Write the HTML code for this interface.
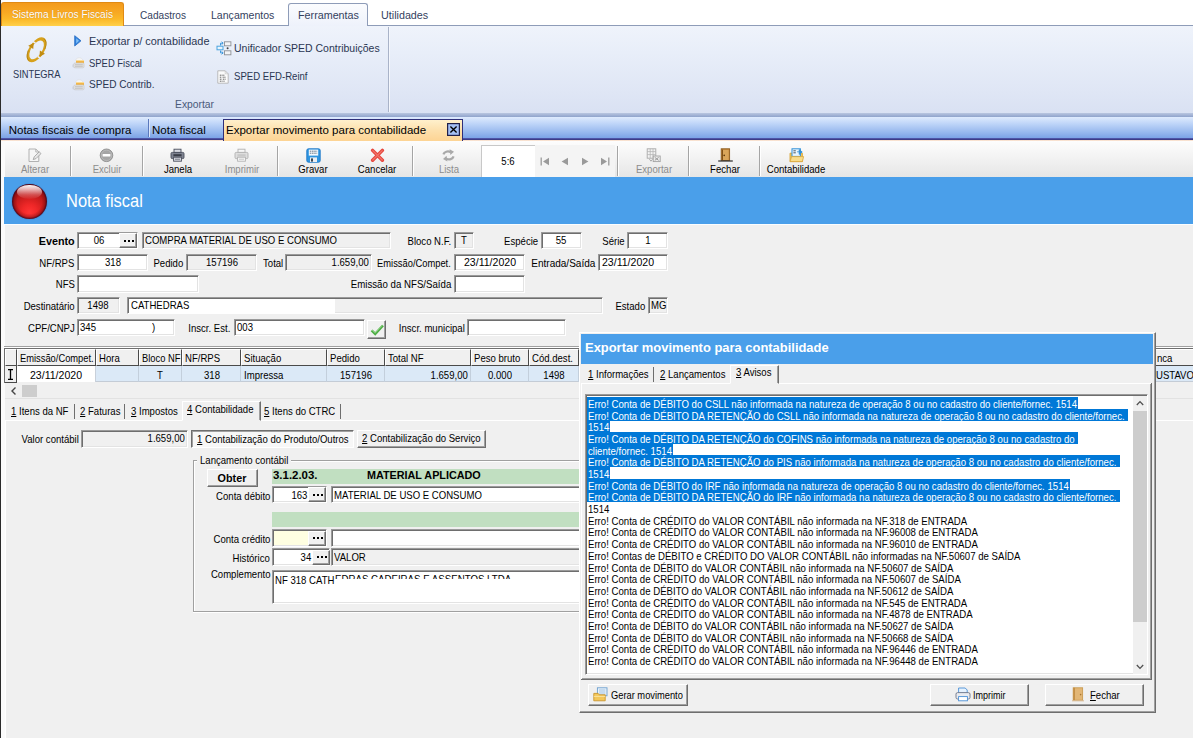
<!DOCTYPE html>
<html lang="pt-BR">
<head>
<meta charset="utf-8">
<title>Sistema Livros Fiscais</title>
<style>
*{box-sizing:border-box;margin:0;padding:0}
html,body{width:1193px;height:738px;overflow:hidden;background:#f0f0f0}
body{position:relative;font-family:"Liberation Sans",sans-serif;font-size:11px;color:#000}
.a{position:absolute;white-space:nowrap}
.t{position:absolute;white-space:nowrap;line-height:13px;height:13px;font-size:11px}
#rtabs{left:0;top:0;width:1193px;height:26px;background:#fff}
#rbody{left:1px;top:25px;width:1192px;height:89px;background:linear-gradient(#eff3fb 0%,#e8eef9 30%,#dfe6f5 75%,#d9e1f3 100%);border-top:1px solid #8e9cb8}
.rt{font-size:10.75px;color:#34415e;line-height:14px;height:14px}
.ri{font-size:10.75px;color:#2a3652;line-height:14px;height:14px}
#dtabs{left:1px;top:113px;width:1192px;height:28px;background:linear-gradient(#b9c6e0 0px,#8fa3cc 4px,#dce9fd 4.5px,#bdd4f8 11px,#98b9ee 19px,#7ba3e6 25px,#45459a 25.6px,#3b3b85 26.6px,#f3d3c0 26.9px,#fdeedd 28px)}
.dt{font-size:11.5px;line-height:15px;height:15px;color:#000}
.f{position:absolute;border:1px solid;border-color:#9a9a9a #fff #fff #9a9a9a;box-shadow:inset 1px 1px 0 #6e6e6e,inset -1px -1px 0 #e3e3e3}
.btn{position:absolute;background:#f0f0f0;border:1px solid;border-color:#fff #6e6e6e #6e6e6e #fff;box-shadow:inset -1px -1px 0 #a0a0a0}
.btn i{position:absolute;top:50%;margin-top:-1px;width:2px;height:2px;background:#000}
.sep{position:absolute;width:2px;border-left:1px solid #a5a5a5;border-right:1px solid #fff}
.gh{position:absolute;height:17px;background:#f0f0f0;border-right:1px solid #4a4a4a;border-left:1px solid #fff;border-bottom:1px solid #4a4a4a;border-top:1px solid #fff}
.gc{position:absolute;height:16px;background:#dbe9f7;border-right:1px solid #c8d4e0}
</style>
</head>
<body>

<div class="a" id="rtabs"></div>
<div class="a" id="rbody"></div>
<div class="a" style="left:0;top:0;width:1px;height:738px;background:#2b2b2b"></div>
<div class="a" style="left:1px;top:2px;width:123px;height:24px;border-radius:3px 3px 0 0;background:linear-gradient(#f39a1c 0%,#f7a823 40%,#fbb828 70%,#ffd04a 100%);border:1px solid #e08a14;border-bottom:0"></div>
<div class="a rt" style="left:11.5px;top:7px;transform:scaleX(0.945);transform-origin:0 0;color:#fff;text-shadow:0 0 1px #c77a10;">Sistema Livros Fiscais</div>
<div class="a" style="left:288px;top:3px;width:80px;height:23px;border:1px solid #8e9cb8;border-bottom:0;border-radius:3px 3px 0 0;background:linear-gradient(#fbfcfe,#eef2fb)"></div>
<div class="a rt" style="left:139.5px;top:8px;transform:scaleX(0.939);transform-origin:0 0;">Cadastros</div>
<div class="a rt" style="left:210.7px;top:8px;transform:scaleX(0.982);transform-origin:0 0;">Lançamentos</div>
<div class="a rt" style="left:298px;top:8px;transform:scaleX(1);transform-origin:0 0;">Ferramentas</div>
<div class="a rt" style="left:381px;top:8px;transform:scaleX(1);transform-origin:0 0;">Utilidades</div>
<div class="a ri" style="left:13px;top:66.7px;transform:scaleX(0.864);transform-origin:0 0;">SINTEGRA</div>
<div class="a ri" style="left:88.5px;top:34.3px;transform:scaleX(1.013);transform-origin:0 0;">Exportar p/ contabilidade</div>
<div class="a ri" style="left:88.5px;top:55.6px;transform:scaleX(0.878);transform-origin:0 0;">SPED Fiscal</div>
<div class="a ri" style="left:88.5px;top:77px;transform:scaleX(0.937);transform-origin:0 0;">SPED Contrib.</div>
<div class="a ri" style="left:234px;top:41.4px;transform:scaleX(0.975);transform-origin:0 0;">Unificador SPED Contribuições</div>
<div class="a ri" style="left:234px;top:69.4px;transform:scaleX(0.892);transform-origin:0 0;">SPED EFD-Reinf</div>
<div class="a ri" style="left:174.8px;top:97px;transform:scaleX(0.96);transform-origin:0 0;color:#4a5a7a;">Exportar</div>
<div class="a" style="left:388px;top:27px;width:1px;height:85px;background:#a9b3c8"></div>
<div class="a" style="left:389px;top:27px;width:1px;height:85px;background:#f4f7fd"></div>
<svg class="a" style="left:22px;top:33px" width="30" height="34" viewBox="0 0 30 34"><g transform="translate(14.6,16.8) rotate(33)"><path fill-rule="evenodd" fill="#d7a11c" d="M0-14a7.6 14 0 1 0 0 28a7.6 14 0 1 0 0-28zM0-10.6a5.4 10.6 0 1 1 0 21.2a5.4 10.6 0 1 1 0-21.2z"/><path fill="#c08c12" d="M3.2-1.2h6l-3 5.4z"/><path fill="#c08c12" d="M-3.2 1.2h-6l3-5.4z"/><path d="M4.6 5h4.6M-4.6-5h-4.6" stroke="#e9eef9" stroke-width="1.5"/><path d="M0-13.2a7 13.2 0 0 1 6.6 8" fill="none" stroke="#8a6410" stroke-width=".6" opacity=".7"/><path d="M0 13.2a7 13.2 0 0 1-6.6-8" fill="none" stroke="#8a6410" stroke-width=".6" opacity=".7"/></g></svg>
<svg class="a" style="left:74.3px;top:35.3px" width="8" height="12" viewBox="0 0 8 12"><path d="M.7 .7L7 5.8.7 11z" fill="#2f7fdc" stroke="#2a6fc4" stroke-width=".8" stroke-linejoin="round"/><path d="M2.2 3.2L5 5.8 2.2 8.6z" fill="#7fc0f7"/></svg>
<svg class="a" style="left:72px;top:57px" width="13" height="12" viewBox="0 0 13 12"><ellipse cx="3" cy="8.8" rx="3" ry="2" fill="#b8c0d2" opacity=".35"/><path d="M3.4 3.4c.6-2 2.4-2.6 3.8-2.6s3 .6 3.8 2.6z" fill="#f7f7f5" stroke="#d6d8de" stroke-width=".5"/><rect x="4" y="3" width="8" height="3.2" fill="#f2b649"/><rect x="4" y="3" width="8" height="1" fill="#f9dc9a"/><rect x="1.8" y="6" width="10.2" height="4.8" rx="1.2" fill="#e4e4e2" stroke="#c2c3c6" stroke-width=".6"/><path d="M3 7.7h7.8M3 9.3h7.8" stroke="#b4b5b8" stroke-width=".7"/></svg>
<svg class="a" style="left:72px;top:79px" width="13" height="12" viewBox="0 0 13 12"><ellipse cx="3" cy="8.8" rx="3" ry="2" fill="#b8c0d2" opacity=".35"/><path d="M3.4 3.4c.6-2 2.4-2.6 3.8-2.6s3 .6 3.8 2.6z" fill="#f7f7f5" stroke="#d6d8de" stroke-width=".5"/><rect x="4" y="3" width="8" height="3.2" fill="#f2b649"/><rect x="4" y="3" width="8" height="1" fill="#f9dc9a"/><rect x="1.8" y="6" width="10.2" height="4.8" rx="1.2" fill="#e4e4e2" stroke="#c2c3c6" stroke-width=".6"/><path d="M3 7.7h7.8M3 9.3h7.8" stroke="#b4b5b8" stroke-width=".7"/></svg>
<svg class="a" style="left:216px;top:41px" width="16" height="15" viewBox="0 0 16 15"><rect x="8.5" y=".8" width="6.4" height="4" fill="#f4f5f7" stroke="#8d9096" stroke-width=".9"/><rect x="8.5" y="9.8" width="6.4" height="4" fill="#f4f5f7" stroke="#8d9096" stroke-width=".9"/><rect x="1" y="5.2" width="6" height="3.6" fill="#eaf4fc" stroke="#4aa3df" stroke-width="1"/><path d="M4.5 4.5V2.2h2.4M5.6 .8l1.6 1.4-1.6 1.4" fill="none" stroke="#2f8fd8" stroke-width=".9"/><path d="M4.5 9.6v2.3h2.4M5.6 10.5l1.6 1.4-1.6 1.4" fill="none" stroke="#2f8fd8" stroke-width=".9"/><circle cx="11.6" cy="7.3" r="1" fill="#444"/></svg>
<svg class="a" style="left:217px;top:70px" width="12" height="14" viewBox="0 0 12 14"><path d="M.8 .8h7.4l3 3v9.4H.8z" fill="#fbfbfb" stroke="#b4b4b4" stroke-width=".9"/><path d="M8.2 .8v3h3" fill="none" stroke="#c4c4c4" stroke-width=".7"/><path d="M2.8 5.2h4.8M2.8 7.2h2M5.6 7.2h3M2.8 9.2h2.4M6 9.2h2.6M2.8 11.2h2.8M6.4 11.2h1.6" stroke="#555" stroke-width=".9" stroke-dasharray="1.2 .5"/></svg>
<div class="a" id="dtabs"></div>
<div class="a dt" style="left:8.7px;top:123px">Notas fiscais de compra</div>
<div class="a" style="left:148px;top:119px;width:1px;height:18px;background:#5b79bd"></div>
<div class="a" style="left:149px;top:119px;width:1px;height:18px;background:#dbe6fb"></div>
<div class="a dt" style="left:152px;top:123px">Nota fiscal</div>
<div class="a" style="left:223px;top:118.5px;width:240px;height:22.5px;background:linear-gradient(#fff0cc,#fde0ac 50%,#fdd494);border:1px solid #2f2f7a;border-bottom:0"></div>
<div class="a dt" style="left:226px;top:123px">Exportar movimento para contabilidade</div>
<svg class="a" style="left:447.3px;top:122.5px" width="13" height="13" viewBox="0 0 13 13"><rect x=".6" y=".6" width="11.8" height="11.8" fill="#a4c0f4" stroke="#20204a" stroke-width="1.2"/><path d="M3.4 3.4l6.2 6.2M9.6 3.4l-6.2 6.2" stroke="#000" stroke-width="1.35"/></svg>
<div class="a" style="left:1px;top:141px;width:1192px;height:36px;background:linear-gradient(#fdfdfd,#f4f4f4 40%,#e6e6e6)"></div>
<div class="a" style="left:1px;top:141px;width:3.5px;height:597px;background:#fbfbfb"></div>
<div class="a" style="left:481px;top:145px;width:54px;height:32px;background:#fff;border-top:1px solid #c8c8c8;border-left:1px solid #c8c8c8"></div>
<div class="a" style="left:535px;top:145px;width:80px;height:32px;background:#f4f4f4"></div>
<div class="sep" style="left:70px;top:146px;height:30px"></div>
<div class="sep" style="left:142px;top:146px;height:30px"></div>
<div class="sep" style="left:277px;top:146px;height:30px"></div>
<div class="sep" style="left:412px;top:146px;height:30px"></div>
<div class="sep" style="left:617px;top:146px;height:30px"></div>
<div class="sep" style="left:688px;top:146px;height:30px"></div>
<div class="sep" style="left:759px;top:146px;height:30px"></div>
<div class="t" style="left:-115px;width:300px;text-align:center;transform-origin:50% 0;top:163px;transform:scaleX(0.87);color:#8c8c8c;">Alterar</div>
<div class="t" style="left:-43px;width:300px;text-align:center;transform-origin:50% 0;top:163px;transform:scaleX(0.87);color:#8c8c8c;">Excluir</div>
<div class="t" style="left:28px;width:300px;text-align:center;transform-origin:50% 0;top:163px;transform:scaleX(0.87);color:#000;">Janela</div>
<div class="t" style="left:92px;width:300px;text-align:center;transform-origin:50% 0;top:163px;transform:scaleX(0.87);color:#8c8c8c;">Imprimir</div>
<div class="t" style="left:163px;width:300px;text-align:center;transform-origin:50% 0;top:163px;transform:scaleX(0.87);color:#000;">Gravar</div>
<div class="t" style="left:227px;width:300px;text-align:center;transform-origin:50% 0;top:163px;transform:scaleX(0.87);color:#000;">Cancelar</div>
<div class="t" style="left:298.5px;width:300px;text-align:center;transform-origin:50% 0;top:163px;transform:scaleX(0.87);color:#8c8c8c;">Lista</div>
<div class="t" style="left:503.5px;width:300px;text-align:center;transform-origin:50% 0;top:163px;transform:scaleX(0.87);color:#8c8c8c;">Exportar</div>
<div class="t" style="left:575px;width:300px;text-align:center;transform-origin:50% 0;top:163px;transform:scaleX(0.87);color:#000;">Fechar</div>
<div class="t" style="left:646px;width:300px;text-align:center;transform-origin:50% 0;top:163px;transform:scaleX(0.87);color:#000;">Contabilidade</div>
<div class="t" style="left:357.5px;width:300px;text-align:center;transform-origin:50% 0;top:155px;transform:scaleX(0.87);">5:6</div>
<svg class="a" style="left:27.1px;top:147.5px" width="15" height="15" viewBox="0 0 15 15"><path d="M2 1h6.8l3 3v9.5H2z" fill="#f6f6f6" stroke="#a9a9a9" stroke-width=".9"/><path d="M8.8 1v3h3" fill="none" stroke="#a9a9a9" stroke-width=".8"/><path d="M6.2 11.6l1-2.8 5-5 1.8 1.8-5 5z" fill="#e6e6e6" stroke="#9c9c9c" stroke-width=".8" stroke-linejoin="round"/></svg>
<svg class="a" style="left:98.5px;top:147.5px" width="15" height="15" viewBox="0 0 15 15"><circle cx="7.5" cy="7.3" r="6.3" fill="#a6a6a6" stroke="#8d8d8d" stroke-width=".9"/><circle cx="7.5" cy="7.3" r="5.2" fill="none" stroke="#bdbdbd" stroke-width=".8"/><rect x="3.6" y="6" width="7.8" height="2.6" rx=".6" fill="#fff"/></svg>
<svg class="a" style="left:170.3px;top:147.5px" width="15" height="15" viewBox="0 0 15 15"><rect x="4" y="1.2" width="7" height="3.4" fill="#d9dbe3" stroke="#4b4f5c" stroke-width=".9"/><rect x="1" y="4.4" width="13" height="6.2" rx="1.2" fill="#7d8290" stroke="#4b4f5c" stroke-width=".9"/><rect x="3.4" y="6.2" width="8.2" height="2" fill="#3a3d48"/><rect x="3.6" y="9.2" width="7.8" height="4" fill="#d9dbe3" stroke="#4b4f5c" stroke-width=".9"/><path d="M5 11.2h5" stroke="#4b4f5c" stroke-width=".7"/></svg>
<svg class="a" style="left:234.2px;top:147.5px" width="15" height="15" viewBox="0 0 15 15"><rect x="4" y="1.2" width="7" height="3.4" fill="#f7f7f7" stroke="#b1b1b1" stroke-width=".9"/><rect x="1" y="4.4" width="13" height="6.2" rx="1.2" fill="#dedede" stroke="#b1b1b1" stroke-width=".9"/><rect x="3.4" y="6.2" width="8.2" height="2" fill="#c9c9c9"/><rect x="3.6" y="9.2" width="7.8" height="4" fill="#f7f7f7" stroke="#b1b1b1" stroke-width=".9"/><path d="M5 11.2h5" stroke="#b1b1b1" stroke-width=".7"/></svg>
<svg class="a" style="left:305.5px;top:147.5px" width="15" height="15" viewBox="0 0 15 15"><rect x=".8" y=".8" width="13.4" height="13.4" rx="1.6" fill="#2f95e0" stroke="#1d78c8" stroke-width=".9"/><rect x="2.8" y="1.6" width="9.4" height="6" fill="#f4f9fe"/><path d="M3.8 3.2h7.4M3.8 5.2h7.4" stroke="#5a6a7c" stroke-width=".9" stroke-dasharray="1.6 .6"/><rect x="4" y="9.4" width="7" height="4.6" fill="#e9eef4"/><rect x="5" y="10.4" width="2" height="3.2" fill="#3a4754"/></svg>
<svg class="a" style="left:369.5px;top:147.5px" width="15" height="15" viewBox="0 0 15 15"><path d="M2.6 2.4l9.8 9.8M12.4 2.4l-9.8 9.8" stroke="#e5453c" stroke-width="3.4" stroke-linecap="round"/><path d="M2.8 2.6l9.4 9.4M12.2 2.6l-9.4 9.4" stroke="#f2746a" stroke-width="1.2" stroke-linecap="round"/></svg>
<svg class="a" style="left:441.0px;top:147.5px" width="15" height="15" viewBox="0 0 15 15"><path d="M2.4 6.4c.8-2.6 4.4-3.8 7.4-2.2" fill="none" stroke="#a9a9a9" stroke-width="2.2"/><path d="M8.6 1.2l4.4 2.6-3.6 3.2z" fill="#a9a9a9"/><path d="M12.6 8.4c-.8 2.6-4.4 3.8-7.4 2.2" fill="none" stroke="#a9a9a9" stroke-width="2.2"/><path d="M6.4 13.6L2 11l3.6-3.2z" fill="#a9a9a9"/></svg>
<svg class="a" style="left:646.0px;top:147.5px" width="15" height="15" viewBox="0 0 15 15"><rect x="1.2" y=".8" width="8.6" height="9.4" fill="#f3f3f3" stroke="#a9a9a9" stroke-width=".9"/><path d="M1.2 3.6h8.6M1.2 6.6h8.6M4.2 .8v9.4M7 .8v9.4" stroke="#b5b5b5" stroke-width=".8"/><rect x="7.2" y="8" width="7" height="5.6" fill="#ececec" stroke="#a2a2a2" stroke-width=".9"/><path d="M8.8 9.4l3.8 3M12.6 9.4l-3.8 3" stroke="#9a9a9a" stroke-width="1"/><path d="M3.4 11.2l1.6 2 1.6-2" fill="none" stroke="#a9a9a9" stroke-width="1"/></svg>
<svg class="a" style="left:717.5px;top:147.5px" width="15" height="15" viewBox="0 0 15 15"><rect x="3.2" y=".8" width="8.4" height="11.6" fill="#c68a3c" stroke="#8c5a1c" stroke-width=".9"/><rect x="5" y="2" width="5.6" height="10" fill="#d9a55a"/><path d="M4.4 1.6v10.4" stroke="#7a4a12" stroke-width="1"/><circle cx="6.2" cy="7.4" r=".8" fill="#5a3408"/><path d="M.2 13h14.6" stroke="#2b2b2b" stroke-width="1.2"/></svg>
<svg class="a" style="left:788.5px;top:147.5px" width="16" height="15" viewBox="0 0 16 15"><path d="M1 5.2h12.4v8.4H1z" fill="#f3c75a" stroke="#d9a63a" stroke-width=".9"/><rect x="3" y=".8" width="8.4" height="7.6" fill="#eaf5fd" stroke="#2f8fd8" stroke-width="1"/><path d="M4.4 2.8h2.4M4.4 4.8h2.4" stroke="#3a4754" stroke-width=".9"/><path d="M8 3.8h3.4M10.2 1.6l3 2.4-3 2.4z" fill="#2f8fd8" stroke="#2f8fd8" stroke-width=".8"/><path d="M1 13.6l1.6-5h12l-1.2 5z" fill="#f8dc8a" stroke="#d9a63a" stroke-width=".8"/></svg>
<svg class="a" style="left:540px;top:156.5px" width="10" height="9" viewBox="0 0 10 9"><path d="M1.2 .6v7.8" stroke="#9a9a9a" stroke-width="1.3"/><path d="M9 .8L3 4.5l6 3.7z" fill="#9a9a9a"/></svg>
<svg class="a" style="left:560px;top:156.5px" width="9" height="9" viewBox="0 0 9 9"><path d="M8 .8L1.6 4.5 8 8.2z" fill="#9a9a9a"/></svg>
<svg class="a" style="left:581px;top:156.5px" width="9" height="9" viewBox="0 0 9 9"><path d="M1 .8l6.4 3.7L1 8.2z" fill="#9a9a9a"/></svg>
<svg class="a" style="left:600px;top:156.5px" width="10" height="9" viewBox="0 0 10 9"><path d="M8.8 .6v7.8" stroke="#9a9a9a" stroke-width="1.3"/><path d="M1 .8l6 3.7-6 3.7z" fill="#9a9a9a"/></svg>
<div class="a" style="left:4px;top:177.4px;width:1189px;height:46.3px;background:#4a9fea"></div>
<div class="a" style="left:4px;top:223.7px;width:1189px;height:1px;background:#fbfdfe"></div>
<div class="a" style="left:11.9px;top:183.8px;width:34.8px;height:34.8px;border-radius:50%;background:radial-gradient(circle closest-side at 50% 50%,rgba(0,0,0,0) 0%,rgba(0,0,0,0) 70%,rgba(80,0,10,.3) 88%,rgba(50,0,25,.85) 100%),radial-gradient(circle at 50% 80%,#ff3434 0%,#f02828 22%,#d21f1f 42%,#b81919 60%,#a81515 100%);box-shadow:0 0 1px rgba(50,10,50,.7)"></div>
<div class="a" style="left:16.6px;top:184.6px;width:25.2px;height:14.6px;border-radius:50%;background:linear-gradient(rgba(255,255,255,.97) 0%,rgba(255,235,235,.75) 30%,rgba(255,200,200,.3) 70%,rgba(255,160,160,.05) 100%)"></div>
<div class="t" style="left:66px;transform-origin:0 0;top:191px;transform:scaleX(0.94);color:#fff;font-size:17.5px;line-height:20px;height:20px;">Nota fiscal</div>
<div class="t" style="right:1118.5px;transform-origin:100% 0;top:234.8px;transform:scaleX(0.98);font-weight:bold;">Evento</div>
<div class="f" style="left:77px;top:231.5px;width:61px;height:17.6px;background:#fff"></div>
<div class="t" style="left:-51.2px;width:300px;text-align:center;transform-origin:50% 0;top:233.6px;transform:scaleX(0.87);">06</div>
<div class="btn" style="left:119px;top:233px;width:18px;height:15px"><i style="left:4px"></i><i style="left:8px"></i><i style="left:12px"></i></div>
<div class="f" style="left:142px;top:231.5px;width:249px;height:17.6px;background:#f0f0f0"></div>
<div class="t" style="left:145px;transform-origin:0 0;top:233.6px;transform:scaleX(0.87);">COMPRA MATERIAL DE USO E CONSUMO</div>
<div class="t" style="right:742px;transform-origin:100% 0;top:234.8px;transform:scaleX(0.87);">Bloco N.F.</div>
<div class="f" style="left:454px;top:231.5px;width:20px;height:17.6px;background:#f0f0f0"></div>
<div class="t" style="left:314px;width:300px;text-align:center;transform-origin:50% 0;top:233.6px;transform:scaleX(0.87);">T</div>
<div class="t" style="right:655px;transform-origin:100% 0;top:234.8px;transform:scaleX(0.87);">Espécie</div>
<div class="f" style="left:541px;top:231.5px;width:41px;height:17.6px;background:#fff"></div>
<div class="t" style="left:411px;width:300px;text-align:center;transform-origin:50% 0;top:233.6px;transform:scaleX(0.87);">55</div>
<div class="t" style="right:568px;transform-origin:100% 0;top:234.8px;transform:scaleX(0.87);">Série</div>
<div class="f" style="left:627px;top:231.5px;width:41px;height:17.6px;background:#fff"></div>
<div class="t" style="left:498px;width:300px;text-align:center;transform-origin:50% 0;top:233.6px;transform:scaleX(0.87);">1</div>
<div class="t" style="right:1118.5px;transform-origin:100% 0;top:256.8px;transform:scaleX(0.87);">NF/RPS</div>
<div class="f" style="left:77px;top:253.5px;width:70.6px;height:17.6px;background:#fff"></div>
<div class="t" style="left:-37px;width:300px;text-align:center;transform-origin:50% 0;top:255.6px;transform:scaleX(0.87);">318</div>
<div class="t" style="right:1009.5px;transform-origin:100% 0;top:256.8px;transform:scaleX(0.87);">Pedido</div>
<div class="f" style="left:186px;top:253.5px;width:71px;height:17.6px;background:#f0f0f0"></div>
<div class="t" style="left:72px;width:300px;text-align:center;transform-origin:50% 0;top:255.6px;transform:scaleX(0.87);">157196</div>
<div class="t" style="right:909.5px;transform-origin:100% 0;top:256.8px;transform:scaleX(0.87);">Total</div>
<div class="f" style="left:285px;top:253.5px;width:87px;height:17.6px;background:#f0f0f0"></div>
<div class="t" style="right:824.5px;transform-origin:100% 0;top:255.6px;transform:scaleX(0.87);">1.659,00</div>
<div class="t" style="right:742.5px;transform-origin:100% 0;top:256.8px;transform:scaleX(0.849);">Emissão/Compet.</div>
<div class="f" style="left:454px;top:253.5px;width:71px;height:17.6px;background:#fff"></div>
<div class="t" style="left:340.3px;width:300px;text-align:center;transform-origin:50% 0;top:255.6px;transform:scaleX(0.959);">23/11/2020</div>
<div class="t" style="right:597.5px;transform-origin:100% 0;top:256.8px;transform:scaleX(0.911);">Entrada/Saída</div>
<div class="f" style="left:598px;top:253.5px;width:70px;height:17.6px;background:#fff"></div>
<div class="t" style="left:601.5px;transform-origin:0 0;top:255.6px;transform:scaleX(0.959);">23/11/2020</div>
<div class="t" style="right:1118.5px;transform-origin:100% 0;top:278.3px;transform:scaleX(0.87);">NFS</div>
<div class="f" style="left:77px;top:275.0px;width:122px;height:17.6px;background:#fff"></div>
<div class="t" style="right:742px;transform-origin:100% 0;top:278.3px;transform:scaleX(0.88);">Emissão da NFS/Saída</div>
<div class="f" style="left:454px;top:275.0px;width:71px;height:17.6px;background:#fff"></div>
<div class="t" style="right:1118.5px;transform-origin:100% 0;top:299.8px;transform:scaleX(0.87);">Destinatário</div>
<div class="f" style="left:77px;top:296.5px;width:43px;height:17.6px;background:#f0f0f0"></div>
<div class="t" style="left:-52px;width:300px;text-align:center;transform-origin:50% 0;top:298.6px;transform:scaleX(0.87);">1498</div>
<div class="f" style="left:127px;top:296.5px;width:476px;height:17.6px;background:#f0f0f0"></div>
<div class="a" style="left:129px;top:299px;width:206px;height:14px;background:#fff"></div>
<div class="t" style="left:130.5px;transform-origin:0 0;top:298.6px;transform:scaleX(0.87);">CATHEDRAS</div>
<div class="t" style="right:547.5px;transform-origin:100% 0;top:299.8px;transform:scaleX(0.87);">Estado</div>
<div class="f" style="left:648px;top:296.5px;width:20px;height:17.6px;background:#f0f0f0"></div>
<div class="t" style="left:651px;transform-origin:0 0;top:298.6px;transform:scaleX(0.87);">MG</div>
<div class="t" style="right:1118.5px;transform-origin:100% 0;top:321.8px;transform:scaleX(0.87);">CPF/CNPJ</div>
<div class="f" style="left:77px;top:318.5px;width:98px;height:17.6px;background:#fff"></div>
<div class="t" style="left:80px;transform-origin:0 0;top:320.6px;transform:scaleX(0.87);">345</div>
<div class="t" style="left:152px;transform-origin:0 0;top:320.6px;transform:scaleX(0.87);">)</div>
<div class="t" style="right:962.5px;transform-origin:100% 0;top:321.8px;transform:scaleX(0.87);">Inscr. Est.</div>
<div class="f" style="left:234px;top:318.5px;width:131px;height:17.6px;background:#fff"></div>
<div class="t" style="left:236.5px;transform-origin:0 0;top:320.6px;transform:scaleX(0.87);">003</div>
<div class="btn" style="left:367px;top:320px;width:19.3px;height:18.6px"></div>
<svg class="a" style="left:369px;top:322px" width="16" height="14" viewBox="0 0 16 14"><path d="M2.6 8.4l3.6 3.5 7.8-8.4" fill="none" stroke="#4fae46" stroke-width="2.5" stroke-linejoin="miter"/><path d="M3 8l3.2 3 7.2-7.8" fill="none" stroke="#8fd486" stroke-width=".9"/></svg>
<div class="t" style="right:728.5px;transform-origin:100% 0;top:321.8px;transform:scaleX(0.87);">Inscr. municipal</div>
<div class="f" style="left:467px;top:318.5px;width:99px;height:17.6px;background:#fff"></div>
<div class="a" style="left:4px;top:346px;width:1189px;height:1px;background:#a0a0a0"></div>
<div class="a" style="left:4px;top:347px;width:1189px;height:1px;background:#fff"></div>
<div class="a" style="left:4px;top:348px;width:1189px;height:1px;background:#6e6e6e"></div>
<div class="a" style="left:4px;top:349px;width:1189px;height:17px;background:#f0f0f0;border-bottom:1px solid #4a4a4a"></div>
<div class="a" style="left:4px;top:349px;width:1px;height:34px;background:#6e6e6e"></div>
<div class="gh" style="left:5px;top:349px;width:12px"></div>
<div class="gh" style="left:17px;top:349px;width:79px"></div>
<div class="t" style="left:20px;transform-origin:0 0;top:352.4px;transform:scaleX(0.849);">Emissão/Compet.</div>
<div class="gh" style="left:96px;top:349px;width:43px"></div>
<div class="t" style="left:99px;transform-origin:0 0;top:352.4px;transform:scaleX(0.87);">Hora</div>
<div class="gh" style="left:139px;top:349px;width:43px"></div>
<div class="t" style="left:142px;transform-origin:0 0;top:352.4px;transform:scaleX(0.851);">Bloco NF</div>
<div class="gh" style="left:182px;top:349px;width:59px"></div>
<div class="t" style="left:185px;transform-origin:0 0;top:352.4px;transform:scaleX(0.87);">NF/RPS</div>
<div class="gh" style="left:241px;top:349px;width:86px"></div>
<div class="t" style="left:244px;transform-origin:0 0;top:352.4px;transform:scaleX(0.87);">Situação</div>
<div class="gh" style="left:327px;top:349px;width:58px"></div>
<div class="t" style="left:330px;transform-origin:0 0;top:352.4px;transform:scaleX(0.87);">Pedido</div>
<div class="gh" style="left:385px;top:349px;width:86px"></div>
<div class="t" style="left:388px;transform-origin:0 0;top:352.4px;transform:scaleX(0.87);">Total NF</div>
<div class="gh" style="left:471px;top:349px;width:58px"></div>
<div class="t" style="left:474px;transform-origin:0 0;top:352.4px;transform:scaleX(0.87);">Peso bruto</div>
<div class="gh" style="left:529px;top:349px;width:50px"></div>
<div class="t" style="left:532px;transform-origin:0 0;top:352.4px;transform:scaleX(0.87);">Cód.dest.</div>
<div class="gh" style="left:579px;top:349px;width:640px"></div>
<div class="t" style="left:1156.5px;transform-origin:0 0;top:352.4px;transform:scaleX(0.87);">nca</div>
<div class="a" style="left:5px;top:366px;width:1188px;height:16.4px;background:#dbe9f7;border-bottom:1px solid #c4ccd6"></div>
<div class="a" style="left:5px;top:366px;width:12px;height:17px;background:#f0f0f0;border-right:1px solid #4a4a4a;border-bottom:1px solid #4a4a4a"></div>
<div class="a" style="left:17px;top:366px;width:79px;height:16.4px;background:#fff;border-right:1px solid #c8d0da"></div>
<div class="a" style="left:138px;top:366px;width:1px;height:16.4px;background:#c3cfdc"></div>
<div class="a" style="left:181px;top:366px;width:1px;height:16.4px;background:#c3cfdc"></div>
<div class="a" style="left:240px;top:366px;width:1px;height:16.4px;background:#c3cfdc"></div>
<div class="a" style="left:326px;top:366px;width:1px;height:16.4px;background:#c3cfdc"></div>
<div class="a" style="left:384px;top:366px;width:1px;height:16.4px;background:#c3cfdc"></div>
<div class="a" style="left:470px;top:366px;width:1px;height:16.4px;background:#c3cfdc"></div>
<div class="a" style="left:528px;top:366px;width:1px;height:16.4px;background:#c3cfdc"></div>
<div class="a" style="left:578px;top:366px;width:1px;height:16.4px;background:#c3cfdc"></div>
<div class="t" style="left:-94px;width:300px;text-align:center;transform-origin:50% 0;top:368.6px;transform:scaleX(0.959);">23/11/2020</div>
<div class="t" style="left:10px;width:300px;text-align:center;transform-origin:50% 0;top:368.6px;transform:scaleX(0.87);">T</div>
<div class="t" style="left:62px;width:300px;text-align:center;transform-origin:50% 0;top:368.6px;transform:scaleX(0.87);">318</div>
<div class="t" style="left:244px;transform-origin:0 0;top:368.6px;transform:scaleX(0.87);">Impressa</div>
<div class="t" style="left:205.5px;width:300px;text-align:center;transform-origin:50% 0;top:368.6px;transform:scaleX(0.87);">157196</div>
<div class="t" style="right:725px;transform-origin:100% 0;top:368.6px;transform:scaleX(0.87);">1.659,00</div>
<div class="t" style="left:350px;width:300px;text-align:center;transform-origin:50% 0;top:368.6px;transform:scaleX(0.87);">0.000</div>
<div class="t" style="left:404px;width:300px;text-align:center;transform-origin:50% 0;top:368.6px;transform:scaleX(0.87);">1498</div>
<div class="t" style="left:1156px;transform-origin:0 0;top:368.6px;transform:scaleX(0.87);">USTAVO</div>
<svg class="a" style="left:7px;top:369px" width="7" height="11" viewBox="0 0 7 11"><path d="M1 .5h5M1 10.5h5M3.5 .5v10" stroke="#000" stroke-width="1.3" fill="none"/></svg>
<div class="a" style="left:5px;top:382.6px;width:1188px;height:16.2px;background:#f0f0f0;border-bottom:1px solid #e2e2e2"></div>
<svg class="a" style="left:10px;top:386px" width="7" height="10" viewBox="0 0 7 10"><path d="M5.5 1.5l-3.5 3.5 3.5 3.5" fill="none" stroke="#444" stroke-width="1.4"/></svg>
<div class="a" style="left:22px;top:385px;width:15px;height:12px;background:#cdcdcd"></div>
<div class="a" style="left:5px;top:420px;width:1188px;height:1px;background:#fff"></div>
<div class="a" style="left:5px;top:421px;width:1px;height:317px;background:#fff"></div>
<div class="t" style="left:11px;transform-origin:0 0;top:404.5px;transform:scaleX(0.87);"><u>1</u> Itens da NF</div>
<div class="a" style="left:74px;top:404px;width:1px;height:15px;background:#6e6e6e"></div>
<div class="t" style="left:80px;transform-origin:0 0;top:404.5px;transform:scaleX(0.87);"><u>2</u> Faturas</div>
<div class="a" style="left:124px;top:404px;width:1px;height:15px;background:#6e6e6e"></div>
<div class="t" style="left:131px;transform-origin:0 0;top:404.5px;transform:scaleX(0.87);"><u>3</u> Impostos</div>
<div class="a" style="left:182px;top:401px;width:79px;height:20px;background:#f0f0f0;border:1px solid;border-color:#fff #6e6e6e #f0f0f0 #fff;box-shadow:inset -1px 0 0 #a0a0a0"></div>
<div class="t" style="left:187px;transform-origin:0 0;top:403px;transform:scaleX(0.87);"><u>4</u> Contabilidade</div>
<div class="t" style="left:264px;transform-origin:0 0;top:404.5px;transform:scaleX(0.87);"><u>5</u> Itens do CTRC</div>
<div class="a" style="left:340px;top:404px;width:1px;height:15px;background:#6e6e6e"></div>
<div class="t" style="right:1114.5px;transform-origin:100% 0;top:433.3px;transform:scaleX(0.87);">Valor contábil</div>
<div class="f" style="left:81px;top:430.0px;width:107px;height:17.6px;background:#f0f0f0"></div>
<div class="t" style="right:1008px;transform-origin:100% 0;top:432.1px;transform:scaleX(0.87);">1.659,00</div>
<div class="a" style="left:190.5px;top:430px;width:163px;height:17.5px;background:#f7f7f7;border:1px solid;border-color:#6e6e6e #fff #fff #6e6e6e;box-shadow:inset 1px 1px 0 #a0a0a0"></div>
<div class="t" style="left:197.3px;transform-origin:0 0;top:433.0px;transform:scaleX(0.87);"><u>1</u> Contabilização do Produto/Outros</div>
<div class="btn" style="left:356.5px;top:430px;width:129px;height:18px"></div>
<div class="t" style="left:362.2px;transform-origin:0 0;top:432.2px;transform:scaleX(0.87);"><u>2</u> Contabilização do Serviço</div>
<div class="a" style="left:192.5px;top:460px;width:400px;height:152px;border:1px solid #a0a0a0;border-right:0;box-shadow:inset 1px 1px 0 #fff,0 1px 0 #fff"></div>
<div class="a" style="left:197px;top:454px;width:94px;height:13px;background:#f0f0f0"></div>
<div class="t" style="left:199.5px;transform-origin:0 0;top:453.5px;transform:scaleX(0.87);">Lançamento contábil</div>
<div class="btn" style="left:207px;top:469px;width:51px;height:18px"></div>
<div class="t" style="left:82px;width:300px;text-align:center;transform-origin:50% 0;top:472px;transform:scaleX(0.98);font-weight:bold;">Obter</div>
<div class="a" style="left:272px;top:469px;width:320px;height:14.5px;background:#c1dfc1"></div>
<div class="t" style="left:272.5px;transform-origin:0 0;top:468.6px;transform:scaleX(1.039);font-weight:bold;">3.1.2.03.</div>
<div class="t" style="left:366.6px;transform-origin:0 0;top:468.6px;transform:scaleX(0.981);font-weight:bold;">MATERIAL APLICADO</div>
<div class="t" style="right:923px;transform-origin:100% 0;top:489.7px;transform:scaleX(0.87);">Conta débito</div>
<div class="f" style="left:272px;top:485.5px;width:55px;height:17.6px;background:#fff"></div>
<div class="t" style="right:885.5px;transform-origin:100% 0;top:488.5px;transform:scaleX(0.87);">163</div>
<div class="btn" style="left:308px;top:487px;width:18px;height:15px"><i style="left:4px"></i><i style="left:8px"></i><i style="left:12px"></i></div>
<div class="f" style="left:331px;top:485.5px;width:262px;height:17.6px;background:#fff"></div>
<div class="t" style="left:334px;transform-origin:0 0;top:488.5px;transform:scaleX(0.87);">MATERIAL DE USO E CONSUMO</div>
<div class="a" style="left:272px;top:512px;width:320px;height:14.5px;background:#c1dfc1"></div>
<div class="t" style="right:923px;transform-origin:100% 0;top:533.2px;transform:scaleX(0.87);">Conta crédito</div>
<div class="f" style="left:272px;top:529.0px;width:55px;height:17.6px;background:#ffffe1"></div>
<div class="btn" style="left:308px;top:530.5px;width:18px;height:15px"><i style="left:4px"></i><i style="left:8px"></i><i style="left:12px"></i></div>
<div class="f" style="left:331px;top:529.0px;width:262px;height:17.6px;background:#fff"></div>
<div class="t" style="right:923px;transform-origin:100% 0;top:552.2px;transform:scaleX(0.87);">Histórico</div>
<div class="f" style="left:272px;top:548.0px;width:58px;height:17.6px;background:#fff"></div>
<div class="t" style="right:882px;transform-origin:100% 0;top:551.0px;transform:scaleX(0.87);">34</div>
<div class="btn" style="left:312px;top:549.5px;width:18px;height:15px"><i style="left:4px"></i><i style="left:8px"></i><i style="left:12px"></i></div>
<div class="f" style="left:331px;top:548.0px;width:262px;height:17.6px;background:#f0f0f0"></div>
<div class="t" style="left:334px;transform-origin:0 0;top:551.0px;transform:scaleX(0.87);">VALOR</div>
<div class="t" style="right:923px;transform-origin:100% 0;top:568.4px;transform:scaleX(0.87);">Complemento</div>
<div class="f" style="left:272px;top:570.0px;width:321px;height:34px;background:#fff"></div>
<div class="t" style="left:275px;transform-origin:0 0;top:573.9px;transform:scaleX(0.87);">NF 318 CATH</div>
<div class="a" style="left:335px;top:573.0px;width:200px;height:5.5px;overflow:hidden"><div class="t" style="left:0;top:0;transform:scaleX(0.88);transform-origin:0 0">EDRAS CADEIRAS E ASSENTOS LTDA</div></div>
<!--DIALOG-->
<div class="a" style="left:579px;top:332px;width:577px;height:381px;background:#f0f0f0;border:1px solid;border-color:#fff #6e6e6e #6e6e6e #fff;box-shadow:inset -1px -1px 0 #a0a0a0,inset 1px 1px 0 #f0f0f0"></div>
<div class="a" style="left:581px;top:334px;width:572px;height:30px;background:#4a9fea"></div>
<div class="t" style="left:585px;transform-origin:0 0;top:340px;transform:scaleX(0.995);color:#fff;font-weight:bold;font-size:13px;line-height:16px;height:16px;">Exportar movimento para contabilidade</div>
<div class="t" style="left:588px;transform-origin:0 0;top:367.5px;transform:scaleX(0.87);"><u>1</u> Informações</div>
<div class="a" style="left:653px;top:367px;width:1px;height:15px;background:#6e6e6e"></div>
<div class="t" style="left:660px;transform-origin:0 0;top:367.5px;transform:scaleX(0.87);"><u>2</u> Lançamentos</div>
<div class="a" style="left:730px;top:364.5px;width:49px;height:19px;background:#f0f0f0;border:1px solid;border-color:#fff #6e6e6e #f0f0f0 #fff;box-shadow:inset -1px 0 0 #a0a0a0"></div>
<div class="t" style="left:736px;transform-origin:0 0;top:366px;transform:scaleX(0.87);"><u>3</u> Avisos</div>
<div class="a" style="left:581px;top:382.5px;width:149px;height:1px;background:#fff"></div>
<div class="a" style="left:779px;top:382.5px;width:373px;height:1px;background:#fff"></div>
<div class="a" style="left:581px;top:383px;width:1px;height:296px;background:#fff"></div>
<div class="a" style="left:1151px;top:383px;width:1px;height:297px;background:#6e6e6e"></div>
<div class="a" style="left:1150px;top:384px;width:1px;height:295px;background:#a0a0a0"></div>
<div class="a" style="left:581px;top:679px;width:571px;height:1px;background:#6e6e6e"></div>
<div class="a" style="left:582px;top:678px;width:569px;height:1px;background:#a0a0a0"></div>
<div class="f" style="left:585px;top:394px;width:563px;height:281px;background:#fff"></div>
<div class="a" style="left:1133px;top:396px;width:14px;height:278px;background:#f0f0f0"></div>
<div class="a" style="left:1133px;top:411px;width:14px;height:211px;background:#cdcdcd"></div>
<svg class="a" style="left:1136px;top:400px" width="8" height="6" viewBox="0 0 8 6"><path d="M.8 5l3.2-3.4L7.2 5" fill="none" stroke="#505050" stroke-width="1.3"/></svg>
<svg class="a" style="left:1136px;top:664px" width="8" height="6" viewBox="0 0 8 6"><path d="M.8 1l3.2 3.4L7.2 1" fill="none" stroke="#505050" stroke-width="1.3"/></svg>
<div class="a" style="left:587px;top:397.0px;width:491.1px;height:11.98px;background:#0078d7"></div>
<div class="a" style="left:587px;top:408.68px;width:541.3px;height:11.98px;background:#0078d7"></div>
<div class="a" style="left:587px;top:420.36px;width:23.4px;height:11.98px;background:#0078d7"></div>
<div class="a" style="left:587px;top:432.04px;width:491.4px;height:11.98px;background:#0078d7"></div>
<div class="a" style="left:587px;top:443.72px;width:86.0px;height:11.98px;background:#0078d7"></div>
<div class="a" style="left:587px;top:455.4px;width:533.1px;height:11.98px;background:#0078d7"></div>
<div class="a" style="left:587px;top:467.08px;width:23.4px;height:11.98px;background:#0078d7"></div>
<div class="a" style="left:587px;top:478.76px;width:482.8px;height:11.98px;background:#0078d7"></div>
<div class="a" style="left:587px;top:490.44px;width:533.1px;height:11.98px;background:#0078d7"></div>
<div class="t" style="left:588px;top:397.0px;height:11.68px;line-height:14.68px;transform:scaleX(0.875);transform-origin:0 0;white-space:pre;color:#fff;">Erro! Conta de DÉBITO do CSLL não informada na natureza de operação 8 ou no cadastro do cliente/fornec. 1514</div>
<div class="t" style="left:588px;top:408.68px;height:11.68px;line-height:14.68px;transform:scaleX(0.875);transform-origin:0 0;white-space:pre;color:#fff;">Erro! Conta de DÉBITO DA RETENÇÃO do CSLL não informada na natureza de operação 8 ou no cadastro do cliente/fornec. </div>
<div class="t" style="left:588px;top:420.36px;height:11.68px;line-height:14.68px;transform:scaleX(0.875);transform-origin:0 0;white-space:pre;color:#fff;">1514</div>
<div class="t" style="left:588px;top:432.04px;height:11.68px;line-height:14.68px;transform:scaleX(0.875);transform-origin:0 0;white-space:pre;color:#fff;">Erro! Conta de DÉBITO DA RETENÇÃO do COFINS não informada na natureza de operação 8 ou no cadastro do </div>
<div class="t" style="left:588px;top:443.72px;height:11.68px;line-height:14.68px;transform:scaleX(0.875);transform-origin:0 0;white-space:pre;color:#fff;">cliente/fornec. 1514</div>
<div class="t" style="left:588px;top:455.4px;height:11.68px;line-height:14.68px;transform:scaleX(0.875);transform-origin:0 0;white-space:pre;color:#fff;">Erro! Conta de DÉBITO DA RETENÇÃO do PIS não informada na natureza de operação 8 ou no cadastro do cliente/fornec. </div>
<div class="t" style="left:588px;top:467.08px;height:11.68px;line-height:14.68px;transform:scaleX(0.875);transform-origin:0 0;white-space:pre;color:#fff;">1514</div>
<div class="t" style="left:588px;top:478.76px;height:11.68px;line-height:14.68px;transform:scaleX(0.875);transform-origin:0 0;white-space:pre;color:#fff;">Erro! Conta de DÉBITO do IRF não informada na natureza de operação 8 ou no cadastro do cliente/fornec. 1514</div>
<div class="t" style="left:588px;top:490.44px;height:11.68px;line-height:14.68px;transform:scaleX(0.875);transform-origin:0 0;white-space:pre;color:#fff;">Erro! Conta de DÉBITO DA RETENÇÃO do IRF não informada na natureza de operação 8 ou no cadastro do cliente/fornec. </div>
<div class="t" style="left:588px;top:502.12px;height:11.68px;line-height:14.68px;transform:scaleX(0.874);transform-origin:0 0;white-space:pre;">1514</div>
<div class="t" style="left:588px;top:513.8px;height:11.68px;line-height:14.68px;transform:scaleX(0.874);transform-origin:0 0;white-space:pre;">Erro! Conta de CRÉDITO do VALOR CONTÁBIL não informada na NF.318 de ENTRADA</div>
<div class="t" style="left:588px;top:525.48px;height:11.68px;line-height:14.68px;transform:scaleX(0.874);transform-origin:0 0;white-space:pre;">Erro! Conta de CRÉDITO do VALOR CONTÁBIL não informada na NF.96008 de ENTRADA</div>
<div class="t" style="left:588px;top:537.16px;height:11.68px;line-height:14.68px;transform:scaleX(0.874);transform-origin:0 0;white-space:pre;">Erro! Conta de CRÉDITO do VALOR CONTÁBIL não informada na NF.96010 de ENTRADA</div>
<div class="t" style="left:588px;top:548.84px;height:11.68px;line-height:14.68px;transform:scaleX(0.874);transform-origin:0 0;white-space:pre;">Erro! Contas de DÉBITO e CRÉDITO DO VALOR CONTÁBIL não informadas na NF.50607 de SAÍDA</div>
<div class="t" style="left:588px;top:560.52px;height:11.68px;line-height:14.68px;transform:scaleX(0.874);transform-origin:0 0;white-space:pre;">Erro! Conta de DÉBITO do VALOR CONTÁBIL não informada na NF.50607 de SAÍDA</div>
<div class="t" style="left:588px;top:572.2px;height:11.68px;line-height:14.68px;transform:scaleX(0.874);transform-origin:0 0;white-space:pre;">Erro! Conta de CRÉDITO do VALOR CONTÁBIL não informada na NF.50607 de SAÍDA</div>
<div class="t" style="left:588px;top:583.88px;height:11.68px;line-height:14.68px;transform:scaleX(0.874);transform-origin:0 0;white-space:pre;">Erro! Conta de DÉBITO do VALOR CONTÁBIL não informada na NF.50612 de SAÍDA</div>
<div class="t" style="left:588px;top:595.56px;height:11.68px;line-height:14.68px;transform:scaleX(0.874);transform-origin:0 0;white-space:pre;">Erro! Conta de CRÉDITO do VALOR CONTÁBIL não informada na NF.545 de ENTRADA</div>
<div class="t" style="left:588px;top:607.24px;height:11.68px;line-height:14.68px;transform:scaleX(0.874);transform-origin:0 0;white-space:pre;">Erro! Conta de CRÉDITO do VALOR CONTÁBIL não informada na NF.4878 de ENTRADA</div>
<div class="t" style="left:588px;top:618.92px;height:11.68px;line-height:14.68px;transform:scaleX(0.874);transform-origin:0 0;white-space:pre;">Erro! Conta de DÉBITO do VALOR CONTÁBIL não informada na NF.50627 de SAÍDA</div>
<div class="t" style="left:588px;top:630.6px;height:11.68px;line-height:14.68px;transform:scaleX(0.874);transform-origin:0 0;white-space:pre;">Erro! Conta de DÉBITO do VALOR CONTÁBIL não informada na NF.50668 de SAÍDA</div>
<div class="t" style="left:588px;top:642.28px;height:11.68px;line-height:14.68px;transform:scaleX(0.874);transform-origin:0 0;white-space:pre;">Erro! Conta de CRÉDITO do VALOR CONTÁBIL não informada na NF.96446 de ENTRADA</div>
<div class="t" style="left:588px;top:653.96px;height:11.68px;line-height:14.68px;transform:scaleX(0.874);transform-origin:0 0;white-space:pre;">Erro! Conta de CRÉDITO do VALOR CONTÁBIL não informada na NF.96448 de ENTRADA</div>
<div class="btn" style="left:588px;top:683.5px;width:100px;height:22px"></div>
<div class="t" style="left:611.2px;transform-origin:0 0;top:688.7px;transform:scaleX(0.846);">Gerar movimento</div>
<div class="btn" style="left:930px;top:683.5px;width:99px;height:22px"></div>
<div class="t" style="left:973px;transform-origin:0 0;top:688.7px;transform:scaleX(0.818);">Imprimir</div>
<div class="btn" style="left:1045px;top:683.5px;width:99px;height:22px"></div>
<div class="t" style="left:1089.5px;transform-origin:0 0;top:688.7px;transform:scaleX(0.87);"><u>F</u>echar</div>
<svg class="a" style="left:593px;top:687px" width="15" height="15" viewBox="0 0 15 15"><rect x="4.4" y=".8" width="9.6" height="8" fill="#eaf3fb" stroke="#6c9fcf" stroke-width=".9"/><path d="M6 3h6.4M6 5h6.4M6 7h6.4" stroke="#8fb6dd" stroke-width=".8"/><path d="M.8 6.4h4.4l1 1.4h6v6H.8z" fill="#f3c75a" stroke="#c9962c" stroke-width=".9"/><path d="M.8 9.4h11.4" stroke="#f9e3a0" stroke-width="1"/></svg>
<svg class="a" style="left:955px;top:686.5px" width="16" height="15" viewBox="0 0 16 15"><path d="M3.6 1h6.6l2 2v3.2H3.6z" fill="#e6f2fe" stroke="#4a8fd6" stroke-width=".9"/><rect x="1" y="5.6" width="14" height="6.4" rx="1.6" fill="#e9ebf0" stroke="#6b7488" stroke-width=".9"/><rect x="3.6" y="9.6" width="8.8" height="4.2" fill="#fff" stroke="#4a8fd6" stroke-width=".9"/></svg>
<svg class="a" style="left:1072px;top:686.5px" width="12" height="15" viewBox="0 0 12 15"><rect x="1.2" y=".8" width="9.4" height="12.4" fill="#e2b675" stroke="#c99a50" stroke-width=".9"/><rect x="1.2" y=".8" width="1.8" height="12.4" fill="#c48f45"/><circle cx="8.6" cy="7.6" r=".8" fill="#a87430"/><path d="M0 13.8h12" stroke="#d8b890" stroke-width="1"/></svg>
</body>
</html>
